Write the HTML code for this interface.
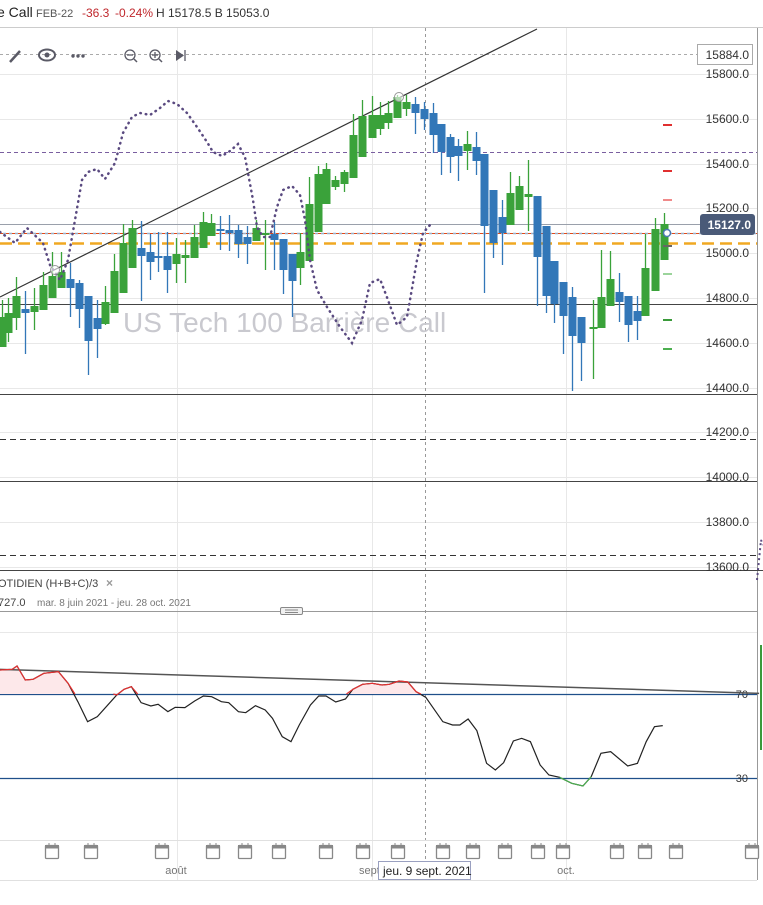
<!DOCTYPE html>
<html><head><meta charset="utf-8"><style>
html,body{margin:0;padding:0;background:#fff;width:763px;height:905px;overflow:hidden;font-family:"Liberation Sans",sans-serif}
svg{position:absolute;left:0;top:0}
</style></head><body>
<svg id="s" width="763" height="905" xmlns="http://www.w3.org/2000/svg" font-family="Liberation Sans, sans-serif">
<text x="-3" y="17" font-size="14" fill="#222">e Call</text>
<text x="36" y="17" font-size="11" fill="#555">FEB-22</text>
<text x="82" y="17" font-size="12" fill="#c0282d">-36.3</text>
<text x="115" y="17" font-size="12" fill="#c0282d">-0.24%</text>
<text x="156" y="17" font-size="12" fill="#333">H 15178.5 B 15053.0</text>
<line x1="0" y1="27.5" x2="763" y2="27.5" stroke="#ccc"/>
<g id="grid" stroke="#e8e8e8" stroke-width="1"></g>
<line x1="757.5" y1="28" x2="757.5" y2="880" stroke="#999"/>
<line x1="425.5" y1="28" x2="425.5" y2="880" stroke="#999" stroke-dasharray="3,3"/>
<line x1="0" y1="54.5" x2="697" y2="54.5" stroke="#aaa" stroke-dasharray="3,3"/>
<line x1="0" y1="152.5" x2="757" y2="152.5" stroke="#7a5fa0" stroke-dasharray="4,3"/>
<line x1="0" y1="224.5" x2="700" y2="224.5" stroke="#9aa0ab"/>
<line x1="0" y1="233.5" x2="757" y2="233.5" stroke="#e04a1a" stroke-dasharray="3,3"/>
<line x1="3" y1="233.5" x2="757" y2="233.5" stroke="#9bb0c8" stroke-dasharray="3,3" stroke-width="1.5"/>
<line x1="0" y1="243.5" x2="757" y2="243.5" stroke="#f0a822" stroke-dasharray="12,6" stroke-width="2.5"/>
<line x1="0" y1="304.5" x2="757" y2="304.5" stroke="#444"/>
<line x1="0" y1="394.5" x2="757" y2="394.5" stroke="#444"/>
<line x1="0" y1="439.5" x2="757" y2="439.5" stroke="#333" stroke-dasharray="6,4"/>
<line x1="0" y1="481.5" x2="757" y2="481.5" stroke="#444"/>
<line x1="0" y1="555.5" x2="757" y2="555.5" stroke="#333" stroke-dasharray="6,4"/>
<line x1="0" y1="570.5" x2="763" y2="570.5" stroke="#444"/>
<text x="123" y="332" font-size="28" fill="#c9c9cf">US Tech 100 Barrière Call</text>
<line x1="0" y1="297" x2="537" y2="29" stroke="#333" stroke-width="1.2"/>
<g id="candles"></g>
<polyline fill="none" stroke="#5a4a80" stroke-width="2.5" stroke-dasharray="0.5,5" stroke-linecap="round" points="0,232 15,243 27,228 43,243 50,265 60,280 68,260 75,220 82,180 88,172 97,169 105,179 115,163 123,133 132,117 140,113 150,115 160,108 168,101 177,104 187,113 197,127 207,142 213,152 222,156 230,151 238,144 245,157 248,173 253,200 257,227 263,237 270,237 277,207 283,190 292,186 300,195 305,220 310,260 317,290 327,307 340,327 352,343 362,320 370,283 380,279 388,300 397,325 407,317 417,260 423,233 430,225"/>
<circle cx="55" cy="270" r="4.5" fill="#fff" fill-opacity="0.6" stroke="#999"/>
<circle cx="399" cy="97" r="4.5" fill="#fff" fill-opacity="0.6" stroke="#999"/>
<circle cx="667" cy="233" r="3.5" fill="#fff" stroke="#4a78b0" stroke-width="1.5"/>
<g stroke-width="2">
<line x1="663" y1="125" x2="672" y2="125" stroke="#e03030"/>
<line x1="663" y1="171" x2="672" y2="171" stroke="#e03030"/>
<line x1="663" y1="200" x2="672" y2="200" stroke="#f08a8a"/>
<line x1="663" y1="246" x2="672" y2="246" stroke="#666"/>
<line x1="663" y1="274" x2="672" y2="274" stroke="#9bd49b"/>
<line x1="663" y1="320" x2="672" y2="320" stroke="#3a9a3a"/>
<line x1="663" y1="349" x2="672" y2="349" stroke="#4caf50"/>
</g>
<g font-size="12" fill="#333" text-anchor="end">
<text x="749" y="78">15800.0</text><text x="749" y="123">15600.0</text><text x="749" y="168">15400.0</text>
<text x="749" y="212">15200.0</text><text x="749" y="257">15000.0</text><text x="749" y="302">14800.0</text>
<text x="749" y="347">14600.0</text><text x="749" y="392">14400.0</text><text x="749" y="436">14200.0</text>
<text x="749" y="481">14000.0</text><text x="749" y="526">13800.0</text><text x="749" y="571">13600.0</text>
</g>
<rect x="697.5" y="44.5" width="55" height="20" fill="#fff" stroke="#aaa"/>
<text x="749" y="59" font-size="12" fill="#333" text-anchor="end">15884.0</text>
<rect x="700" y="214" width="55" height="21" rx="3" fill="#4a5a78"/>
<text x="751" y="229" font-size="12" font-weight="bold" fill="#fff" text-anchor="end">15127.0</text>
<g fill="#5a5a66" stroke="#5a5a66">
<line x1="10" y1="62" x2="20" y2="51" stroke-width="2.5"/>
<ellipse cx="47" cy="55" rx="8" ry="5.5" fill="none" stroke-width="2"/><circle cx="47" cy="55" r="2.5" stroke="none"/>
<circle cx="73" cy="56" r="1.7" stroke="none"/><circle cx="78" cy="56" r="1.7" stroke="none"/><circle cx="83" cy="56" r="1.7" stroke="none"/>
<circle cx="130" cy="55" r="5" fill="none" stroke-width="1.3"/><line x1="127" y1="55" x2="133" y2="55" stroke-width="1.3"/><line x1="134" y1="59" x2="137" y2="62" stroke-width="1.5"/>
<circle cx="155" cy="55" r="5" fill="none" stroke-width="1.3"/><line x1="152" y1="55" x2="158" y2="55" stroke-width="1.3"/><line x1="155" y1="52" x2="155" y2="58" stroke-width="1.3"/><line x1="159" y1="59" x2="162" y2="62" stroke-width="1.5"/>
<path d="M176,50 L184,55.5 L176,61 Z" stroke="none"/><line x1="185" y1="50" x2="185" y2="61" stroke-width="1.3"/>
</g>
<text x="-2" y="587" font-size="11" fill="#444">OTIDIEN   (H+B+C)/3</text>
<text x="106" y="587" font-size="12" fill="#999" font-weight="bold">×</text>
<text x="-2" y="606" font-size="11" fill="#444">727.0</text>
<text x="37" y="606" font-size="10" fill="#777">mar. 8 juin 2021 - jeu. 28 oct. 2021</text>
<line x1="0" y1="611.5" x2="757" y2="611.5" stroke="#999"/>
<rect x="280.5" y="607.5" width="22" height="7" rx="1.5" fill="#f0f0f0" stroke="#888"/>
<line x1="285" y1="610" x2="298" y2="610" stroke="#888"/><line x1="285" y1="612.5" x2="298" y2="612.5" stroke="#888"/>
<line x1="0" y1="694.5" x2="757" y2="694.5" stroke="#1f4f8a" stroke-width="1.2"/>
<line x1="0" y1="778.5" x2="757" y2="778.5" stroke="#1f4f8a" stroke-width="1.2"/>
<text x="748" y="698" font-size="11" fill="#333" text-anchor="end">70</text>
<text x="748" y="782" font-size="11" fill="#333" text-anchor="end">30</text>
<g transform="translate(0,640) scale(0.4866,0.3333)">
<path d="M0,90 L25,88 L35,78 L52,120 L68,118 L90,100 L120,95 L140,130 L152,162 L0,162Z" fill="#fde8ea"/>
<path d="M720,162 L725,148 L745,133 L765,130 L785,135 L800,133 L820,123 L838,126 L855,155 L865,162Z" fill="#fde8ea"/>
<line x1="0" y1="88" x2="1560" y2="160" stroke="#555" stroke-width="1.5" vector-effect="non-scaling-stroke"/>
<polyline fill="none" stroke="#222" stroke-width="1.2" vector-effect="non-scaling-stroke" points="0,90 25,88 35,78 52,120 68,118 90,100 120,95 140,130 160,185 180,245 200,230 240,165 255,148 270,140 290,188 310,198 325,193 345,215 360,202 380,203 400,183 418,168 435,170 455,185 470,188 490,215 505,218 525,197 545,210 560,235 580,290 598,305 615,255 638,195 655,168 670,168 690,186 710,177 725,148 745,133 765,130 785,135 800,133 820,123 838,126 855,155 875,172 910,245 930,255 945,255 962,237 980,272 1000,370 1018,390 1035,368 1055,303 1072,295 1090,305 1110,375 1128,405 1150,412 1175,430 1198,438 1215,410 1235,340 1255,335 1290,378 1310,370 1328,305 1345,260 1362,257"/>
<polyline fill="none" stroke="#e53030" stroke-width="1.2" vector-effect="non-scaling-stroke" points="0,90 25,88 35,78 52,120 68,118 90,100 120,95 140,130 154,162"/>
<polyline fill="none" stroke="#e53030" stroke-width="1.2" vector-effect="non-scaling-stroke" points="233,162 240,165 255,148 270,140 283,162"/>
<polyline fill="none" stroke="#e53030" stroke-width="1.2" vector-effect="non-scaling-stroke" points="712,162 725,148 745,133 765,130 785,135 800,133 820,123 838,126 855,155 865,162"/>
<polyline fill="none" stroke="#4caf50" stroke-width="1.2" vector-effect="non-scaling-stroke" points="1150,412 1175,430 1198,438 1215,410"/>
</g>
<line x1="761" y1="645" x2="761" y2="750" stroke="#3a9a3a" stroke-width="2"/>
<polyline fill="none" stroke="#5a4a80" stroke-width="2" stroke-dasharray="2,3" points="757,580 759,560 761,540 763,545"/>
<line x1="0" y1="840.5" x2="757" y2="840.5" stroke="#e0e0e0"/>
<line x1="0" y1="880.5" x2="757" y2="880.5" stroke="#e0e0e0"/>
<g id="cal"></g>
<text x="176" y="874" font-size="11" fill="#777" text-anchor="middle">août</text>
<text x="359" y="874" font-size="11" fill="#777">sept</text>
<text x="566" y="874" font-size="11" fill="#777" text-anchor="middle">oct.</text>
<rect x="378.5" y="861.5" width="92" height="18" fill="#fff" stroke="#9aa0c0"/>
<text x="383" y="875" font-size="12" fill="#222">jeu. 9 sept. 2021</text>
</svg>
<script>
var NS="http://www.w3.org/2000/svg",s=document.getElementById('s');
function el(p,t,a){var e=document.createElementNS(NS,t);for(var k in a)e.setAttribute(k,a[k]);p.appendChild(e);return e;}
var g=document.getElementById('grid');
[74,119,164,208,253,298,343,388,432,477,522,567].forEach(function(y){el(g,'line',{x1:0,x2:757,y1:y+.5,y2:y+.5});});
[632].forEach(function(y){el(g,'line',{x1:0,x2:757,y1:y+.5,y2:y+.5});});
[177,372,566].forEach(function(x){el(g,'line',{x1:x+.5,x2:x+.5,y1:28,y2:880});});
var C=[[2,'G',317,347,300,347],[8,'G',313,333,298,342],[16,'G',296,318,277,330],[25,'B',309,313,291,354],[34,'G',306,312,288,330],[43,'G',285,310,272,310],[52,'G',276,298,252,298],[61,'G',272,288,252,288],[70,'B',279,288,263,317],[79,'B',283,309,280,328],[88,'B',296,341,296,375],[97,'B',318,329,300,358],[105,'G',302,324,286,325],[114,'G',271,313,254,313],[123,'G',243,293,224,293],[132,'G',228,268,220,268],[141,'B',248,256,221,301],[150,'B',252,262,234,280],[158,'B',256,257,232,272],[167,'B',256,270,232,293],[176,'G',254,264,238,283],[185,'G',255,258,240,283],[194,'G',237,258,225,258],[203,'G',222,248,212,248],[211,'G',223,236,214,236],[220,'B',229,230,216,250],[229,'B',230,233,215,251],[238,'B',230,244,225,258],[247,'B',237,244,226,264],[256,'G',228,241,220,241],[265,'G',233,235,220,270],[274,'B',234,240,222,270],[283,'B',239,270,239,294],[292,'B',254,281,254,317],[300,'G',252,268,233,285],[309,'G',204,261,177,261],[318,'G',174,232,166,232],[326,'G',169,204,163,204],[335,'G',180,187,176,190],[344,'G',172,184,170,192],[353,'G',135,178,114,178],[362,'G',116,157,100,157],[372,'G',115,138,96,138],[380,'G',115,129,102,135],[388,'G',113,123,101,129],[397,'G',97,118,95,118],[406,'G',102,109,95,116],[415,'B',104,113,97,134],[424,'B',109,119,102,130],[433,'B',113,135,103,153],[441,'B',124,152,124,175],[450,'B',137,157,134,173],[458,'B',146,156,139,181],[467,'G',144,151,131,170],[476,'B',147,161,132,175],[484,'B',154,226,154,293],[493,'B',190,243,190,258],[502,'B',217,233,200,265],[510,'G',193,225,172,225],[519,'G',186,210,176,210],[528,'G',194,197,160,231],[537,'B',196,257,196,306],[546,'B',226,296,226,313],[554,'B',261,304,261,323],[563,'B',282,316,282,354],[572,'B',297,336,287,391],[581,'B',317,343,317,381],[593,'G',327,329,300,379],[601,'G',297,328,250,328],[610,'G',279,306,251,306],[619,'B',292,302,273,322],[628,'B',296,325,296,342],[637,'B',311,321,296,340],[645,'G',268,316,234,316],[655,'G',229,291,218,291],[664,'G',224,260,213,260]];
var cg=document.getElementById('candles');
C.forEach(function(c){var col=c[1]=='G'?'#3aa23a':'#3277b8';
el(cg,'line',{x1:c[0]+.5,x2:c[0]+.5,y1:c[4],y2:c[5],stroke:col,'stroke-width':1.3});
el(cg,'rect',{x:c[0]-3.5,y:c[2],width:8,height:Math.max(2,c[3]-c[2]),fill:col});});
var cal=document.getElementById('cal');
[52,91,162,213,245,279,326,363,398,443,473,505,538,563,617,645,676,752].forEach(function(x){
el(cal,'rect',{x:x-6.5,y:845.5,width:13,height:13,fill:'#fff',stroke:'#888','stroke-width':1.3,rx:1});
el(cal,'rect',{x:x-7,y:845,width:14,height:3.5,fill:'#888'});
el(cal,'line',{x1:x-3,x2:x-3,y1:843,y2:846,stroke:'#888'});el(cal,'line',{x1:x+3,x2:x+3,y1:843,y2:846,stroke:'#888'});});
</script>
</body></html>
